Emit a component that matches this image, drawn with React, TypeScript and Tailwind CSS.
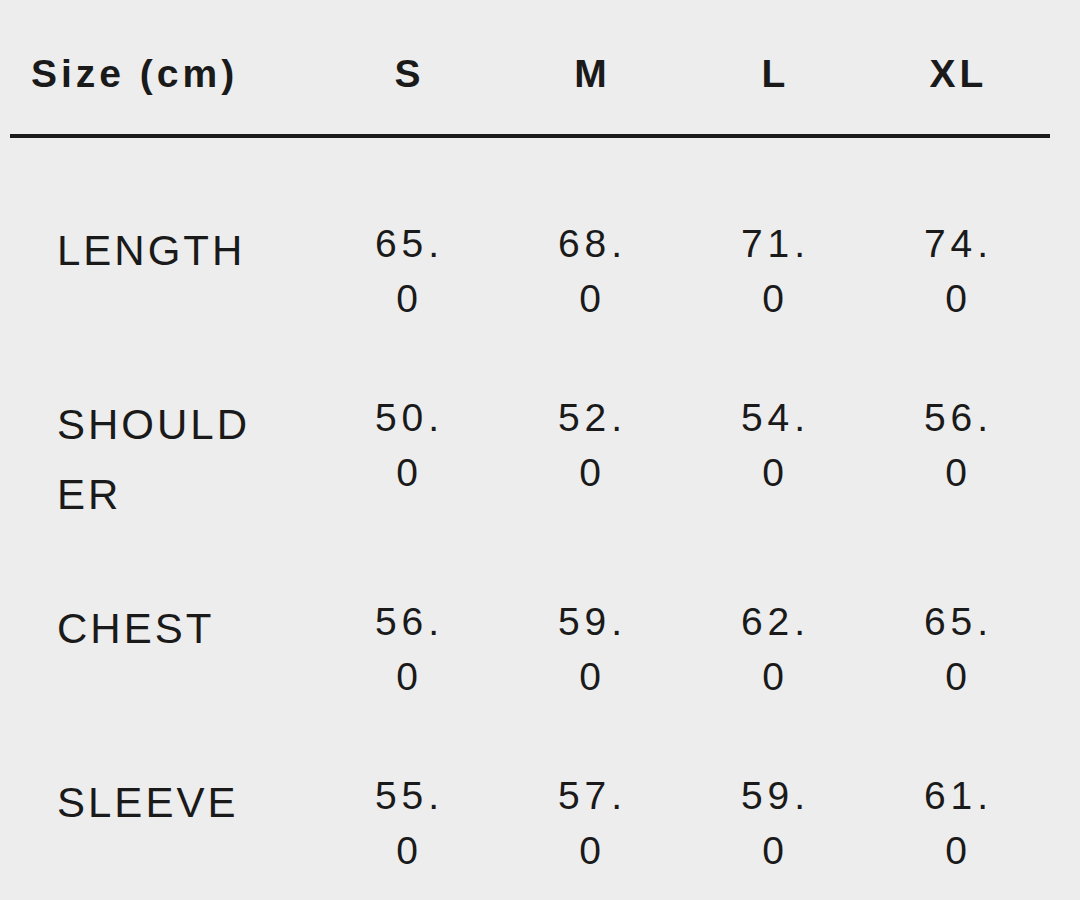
const sizes = ["S", "M", "L", "XL"];

const rows: { label: string[]; values: string[] }[] = [
  { label: ["LENGTH"], values: ["65.0", "68.0", "71.0", "74.0"] },
  { label: ["SHOULD", "ER"], values: ["50.0", "52.0", "54.0", "56.0"] },
  { label: ["CHEST"], values: ["56.0", "59.0", "62.0", "65.0"] },
  { label: ["SLEEVE"], values: ["55.0", "57.0", "59.0", "61.0"] },
];

const splitValue = (v: string) => {
  const i = v.indexOf(".");
  return [v.slice(0, i + 1), v.slice(i + 1)];
};

export default function App() {
  return (
    <div
      className="min-h-[900px] w-[1080px] bg-[#ededed] text-[#1a1a1a]"
      style={{ fontFamily: '"Liberation Sans", Arial, sans-serif' }}
    >
      <div className="mx-[10px] w-[1040px]">
        {/* header */}
        <div className="grid grid-cols-[308px_repeat(4,1fr)] border-b-4 border-[#1a1a1a] pt-[50px] pb-[36px]">
          <div className="pl-[21px] text-[39px] font-bold leading-[48px] tracking-[4px]">
            Size (cm)
          </div>
          {sizes.map((s) => (
            <div
              key={s}
              className="text-center text-[39px] font-bold leading-[48px] tracking-[4px]"
            >
              {s}
            </div>
          ))}
        </div>

        {/* body */}
        <div className="flex flex-col gap-[64px] pt-[78px]">
          {rows.map((row) => (
            <div
              key={row.label.join("")}
              className="grid grid-cols-[308px_repeat(4,1fr)] items-start"
            >
              <div className="pl-[47px] text-[42px] leading-[70px] tracking-[3px]">
                {row.label.map((l) => (
                  <div key={l}>{l}</div>
                ))}
              </div>
              {row.values.map((v, i) => (
                <div
                  key={i}
                  className="text-center text-[39px] leading-[55px] tracking-[5px]"
                >
                  {splitValue(v).map((part, j) => (
                    <div key={j}>{part}</div>
                  ))}
                </div>
              ))}
            </div>
          ))}
        </div>
      </div>
    </div>
  );
}
